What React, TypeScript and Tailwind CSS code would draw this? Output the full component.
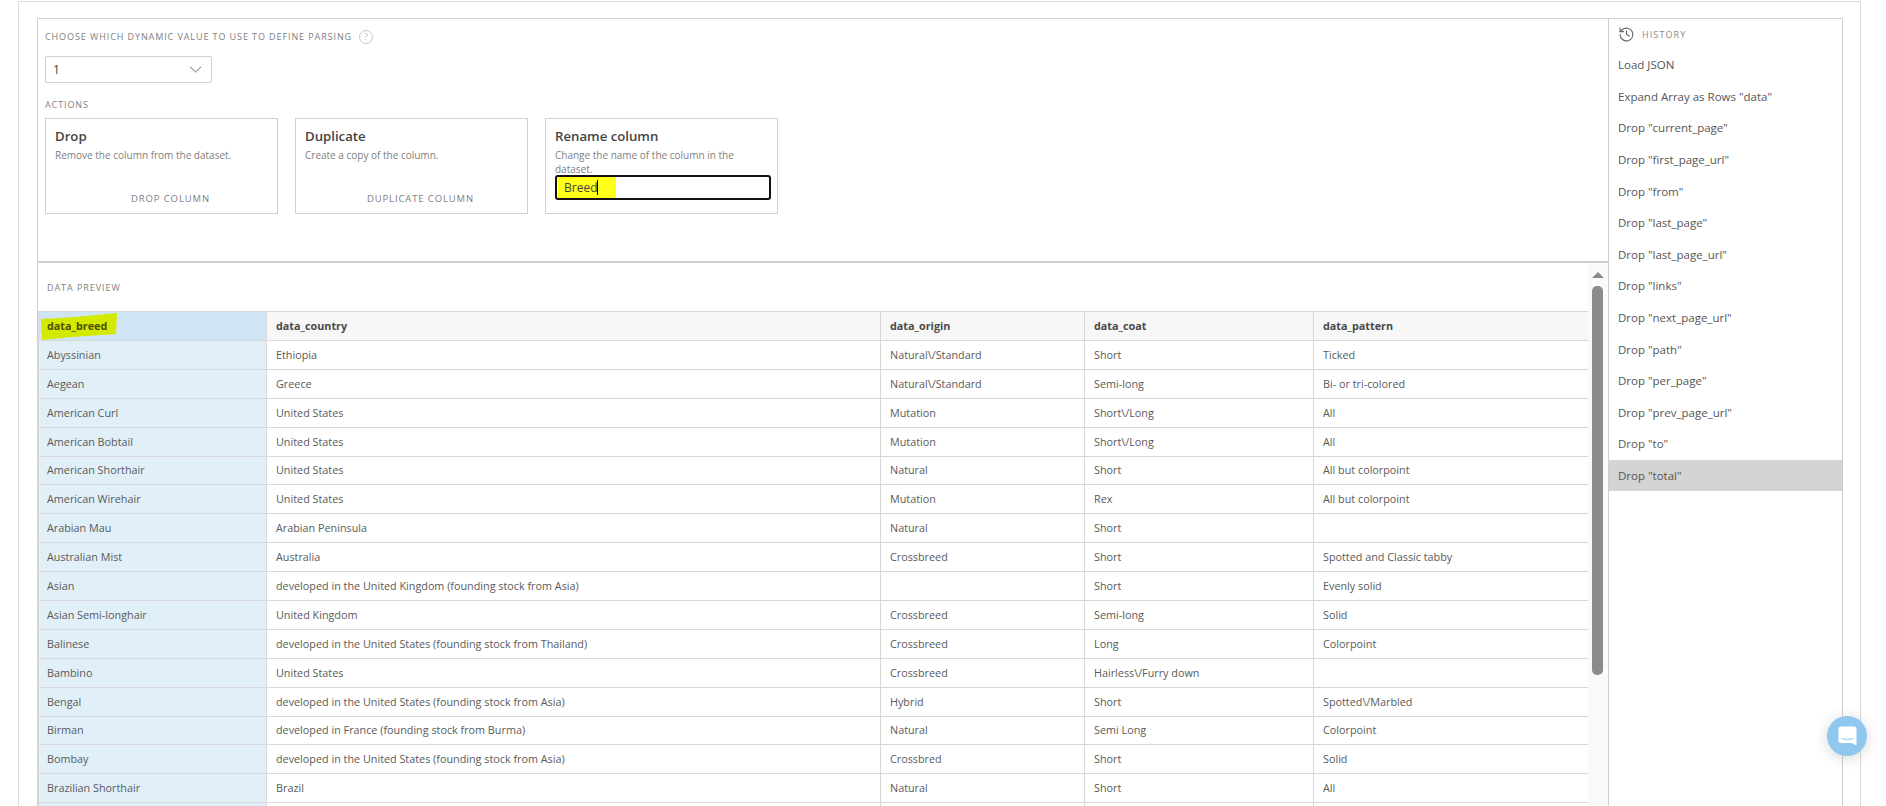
import React from "react";

const rows: string[][] = [
  ["Abyssinian", "Ethiopia", "Natural\\/Standard", "Short", "Ticked"],
  ["Aegean", "Greece", "Natural\\/Standard", "Semi-long", "Bi- or tri-colored"],
  ["American Curl", "United States", "Mutation", "Short\\/Long", "All"],
  ["American Bobtail", "United States", "Mutation", "Short\\/Long", "All"],
  ["American Shorthair", "United States", "Natural", "Short", "All but colorpoint"],
  ["American Wirehair", "United States", "Mutation", "Rex", "All but colorpoint"],
  ["Arabian Mau", "Arabian Peninsula", "Natural", "Short", ""],
  ["Australian Mist", "Australia", "Crossbreed", "Short", "Spotted and Classic tabby"],
  ["Asian", "developed in the United Kingdom (founding stock from Asia)", "", "Short", "Evenly solid"],
  ["Asian Semi-longhair", "United Kingdom", "Crossbreed", "Semi-long", "Solid"],
  ["Balinese", "developed in the United States (founding stock from Thailand)", "Crossbreed", "Long", "Colorpoint"],
  ["Bambino", "United States", "Crossbreed", "Hairless\\/Furry down", ""],
  ["Bengal", "developed in the United States (founding stock from Asia)", "Hybrid", "Short", "Spotted\\/Marbled"],
  ["Birman", "developed in France (founding stock from Burma)", "Natural", "Semi Long", "Colorpoint"],
  ["Bombay", "developed in the United States (founding stock from Asia)", "Crossbred", "Short", "Solid"],
  ["Brazilian Shorthair", "Brazil", "Natural", "Short", "All"],
  ["", "", "", "", ""],
];

const headers = ["data_breed", "data_country", "data_origin", "data_coat", "data_pattern"];

const history = [
  "Load JSON",
  'Expand Array as Rows "data"',
  'Drop "current_page"',
  'Drop "first_page_url"',
  'Drop "from"',
  'Drop "last_page"',
  'Drop "last_page_url"',
  'Drop "links"',
  'Drop "next_page_url"',
  'Drop "path"',
  'Drop "per_page"',
  'Drop "prev_page_url"',
  'Drop "to"',
  'Drop "total"',
];

function Card({ title, desc, action, pad }: { title: string; desc: string; action: string; pad: string }) {
  return (
    <div className="w-[233px] h-[96px] border border-[#d0d0d0] px-[9px] pt-[8px] flex flex-col">
      <div className="text-[13.2px] leading-[19px] font-semibold text-[#444]">{title}</div>
      <div className="text-[10px] leading-[14px] mt-[2px] text-[#808080]">{desc}</div>
      <div className={`mt-auto mb-[7px] text-center text-[9.5px] leading-[14px] tracking-[0.88px] text-[#808080] ${pad}`}>{action}</div>
    </div>
  );
}

export default function App() {
  return (
    <div
      className="h-[806px] overflow-hidden bg-white relative"
      style={{ fontFamily: '"Open Sans", sans-serif' }}
    >
      <div className="ml-[18px] w-[1843px] h-[830px] mt-[1px] border-t border-x border-[#dcdcdc] pl-[18px] pt-[16px]">
        <div className="w-[1806px] h-[810px] border-t border-x border-[#cfcfcf] flex">
          {/* main column */}
          <div className="w-[1570px] shrink-0 flex flex-col">
            <div className="h-[244px] shrink-0 pl-[7px] pt-[10px] border-b-[2px] border-[#cfcfcf]">
              <div className="flex items-center h-[16px] text-[9px] tracking-[0.91px] text-[#808080]">
                <span>CHOOSE WHICH DYNAMIC VALUE TO USE TO DEFINE PARSING</span>
                <span className="ml-[7px] w-[14px] h-[14px] rounded-full border border-[#c9c9c9] text-[#c4c4c4] text-[9px] flex items-center justify-center tracking-normal">?</span>
              </div>
              <div className="mt-[11px] w-[167px] h-[27px] border border-[#d0d0d0] rounded-[2px] flex items-center justify-between pl-[7px] pr-[9px] text-[12px] text-[#444]">
                <span>1</span>
                <svg width="13" height="7" viewBox="0 0 13 7" fill="none" stroke="#666" strokeWidth="1"><path d="M1 0.8 6.5 6 12 0.8" /></svg>
              </div>
              <div className="mt-[15px] h-[14px] flex items-center text-[9px] tracking-[0.9px] text-[#808080]">ACTIONS</div>
              <div className="mt-[6px] flex gap-[17px]">
                <Card title="Drop" desc="Remove the column from the dataset." action="DROP COLUMN" pad="pl-[18px]" />
                <Card title="Duplicate" desc="Create a copy of the column." action="DUPLICATE COLUMN" pad="pl-[18px]" />
                <div className="w-[233px] h-[96px] border border-[#d0d0d0] px-[9px] pt-[8px]">
                  <div className="text-[13.2px] leading-[19px] font-semibold text-[#444]">Rename column</div>
                  <div className="text-[10px] leading-[14px] mt-[2px] text-[#808080] w-[205px]">Change the name of the column in the dataset.</div>
                  <div className="-mt-[1px] w-[216px] h-[25px] border-[2px] border-[#111] rounded-[3px] flex items-center pl-[1px]">
                    <span className="h-[21px] w-[58px] bg-[#ffff1a] flex items-center pl-[6px] text-[12px] text-[#444]">
                      Breed<span className="w-px h-[15px] bg-black"></span>
                    </span>
                  </div>
                </div>
              </div>
            </div>

            <div className="flex flex-1 min-h-0">
              <div className="w-[1550px] shrink-0">
                <div className="h-[48px] pl-[9px] pt-[18px] text-[9px] leading-[14px] tracking-[0.95px] text-[#808080]">DATA PREVIEW</div>
                <table className="table-fixed border-collapse w-[1550px] text-[10.8px] text-[#5a5a5a]">
                  <colgroup>
                    <col className="w-[228px]" />
                    <col className="w-[614px]" />
                    <col className="w-[204px]" />
                    <col className="w-[229px]" />
                    <col className="w-[275px]" />
                  </colgroup>
                  <thead>
                    <tr className="h-[29px]">
                      {headers.map((h, i) => (
                        <th
                          key={h}
                          className={`p-0 text-left font-bold text-[10.8px] text-[#4a4a4a] border border-[#d8d8d8] ${i === 0 ? "pl-[8px] bg-[#cfe5f5] border-[#b7d3e8]" : "pl-[9px] bg-[#f7f7f7]"}`}
                        >
                          {i === 0 ? (
                            <span className="relative inline-block">
                              <svg className="absolute -left-[7px] -top-[6px]" width="78" height="28" viewBox="0 0 78 28">
                                <path d="M1 7 Q30 6 66 2 L77 1 L76 22 Q40 24 2 28 Z" fill="#d3e900" />
                              </svg>
                              <span className="relative text-[#4d5200]">{h}</span>
                            </span>
                          ) : (
                            h
                          )}
                        </th>
                      ))}
                    </tr>
                  </thead>
                  <tbody>
                    {rows.map((r, ri) => (
                      <tr key={ri} className="h-[28.9px]">
                        {r.map((c, i) => (
                          <td
                            key={i}
                            className={`p-0 font-normal border border-[#d8d8d8] ${i === 0 ? "pl-[8px] bg-[#e0eff8]" : "pl-[9px] bg-white"}`}
                          >
                            {c}
                          </td>
                        ))}
                      </tr>
                    ))}
                  </tbody>
                </table>
              </div>
              {/* scrollbar */}
              <div className="flex-1 bg-[#fafafa] flex flex-col items-center pt-[9px]">
                <div className="w-0 h-0 -ml-[1px] border-x-[6px] border-x-transparent border-b-[6px] border-b-[#8b8b8b]"></div>
                <div className="mt-[8px] w-[11px] h-[389px] rounded-[5px] bg-[#8b8b8b] -ml-[1px]"></div>
              </div>
            </div>
          </div>

          {/* history */}
          <div className="flex-1 border-l border-[#cfcfcf]">
            <div className="h-[30px] flex items-center pl-[9px] pt-[1px] gap-[7px]">
              <svg width="17" height="17" viewBox="0 0 24 24" fill="none" stroke="#666" strokeWidth="1.6" strokeLinecap="round" strokeLinejoin="round">
                <path d="M3 12a9 9 0 1 0 3-6.7L3 8" />
                <path d="M3 3v5h5" />
                <path d="M12 7v5l4 2" />
              </svg>
              <span className="text-[9px] tracking-[1.1px] text-[#888]">HISTORY</span>
            </div>
            <div>
              {history.map((h, i) => (
                <div
                  key={h}
                  className={`h-[31.6px] flex items-center pl-[9px] text-[11.5px] text-[#555] ${i === history.length - 1 ? "bg-[#d4d4d4]" : ""}`}
                >
                  {h}
                </div>
              ))}
            </div>
          </div>
        </div>
      </div>

      {/* chat launcher */}
      <div className="absolute left-[1827px] top-[716px] w-[40px] h-[40px] rounded-full bg-[#90c7ee] flex items-center justify-center shadow-[0_2px_14px_rgba(0,0,0,0.16)]">
        <svg width="19" height="20" viewBox="0 0 19 20">
          <path d="M3 0.5H16a2.5 2.5 0 0 1 2.5 2.5V19.5L13.5 17H3A2.5 2.5 0 0 1 .5 14.5V3A2.5 2.5 0 0 1 3 .5Z" fill="#fff" />
          <path d="M3.5 12.5Q9.5 15 15.5 12.5" fill="none" stroke="#90c7ee" strokeWidth="1" />
        </svg>
      </div>
    </div>
  );
}
